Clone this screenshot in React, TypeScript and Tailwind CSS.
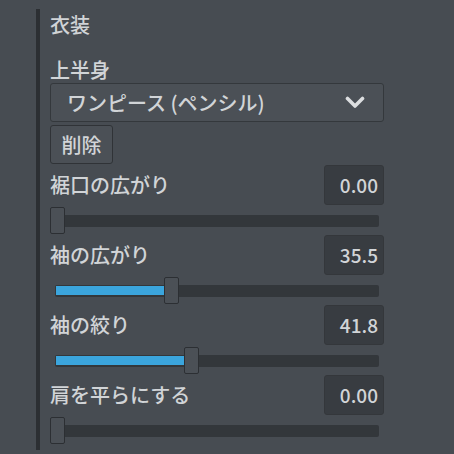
import React from 'react';

const sliders = [
  { label: '裾口の広がり', value: 0, text: '0.00' },
  { label: '袖の広がり', value: 35.5, text: '35.5' },
  { label: '袖の絞り', value: 41.8, text: '41.8' },
  { label: '肩を平らにする', value: 0, text: '0.00' },
];

const Slider: React.FC<{ label: string; value: number; text: string }> = ({ label, value, text }) => {
  const left = value * 3.2;
  return (
    <div className="flex flex-col h-[70px]">
      <div className="flex items-center justify-between h-[40px]">
        <span className="text-[20px] leading-none font-medium">{label}</span>
        <div className="w-[60px] h-[40px] rounded-[3px] bg-[#383c41] border border-[#34373b] flex items-center justify-end pr-[5px] text-[19px] font-medium">
          {text}
        </div>
      </div>
      <div className="relative h-[30px]">
        <div className="absolute left-[5px] right-[5px] top-[10px] h-[12px] rounded-[2px] bg-[#33373b]">
          {value > 0 && (
            <div
              className="absolute left-[1px] top-[1px] h-[9px] bg-[#3ba5dd]"
              style={{ width: left + 1 }}
            />
          )}
        </div>
        <div
          className="absolute top-[2px] w-[15px] h-[27px] rounded-[2px] bg-[#4b5056] border border-[#2c2f33]"
          style={{ left }}
        />
      </div>
    </div>
  );
};

export default function App() {
  return (
    <div
      className="w-[454px] h-[454px] bg-[#474c52] text-[#d1d4d7] overflow-hidden pl-[36px]"
      style={{ fontFamily: '"Noto Sans CJK JP", "Noto Sans", sans-serif' }}
    >
      <div className="mt-[9px] h-[441px] w-[348px] border-l-[4px] border-[#2c2f33] pl-[10px]">
        <div className="w-[334px] flex flex-col">
          <div className="mt-[2px] h-[28px] leading-[28px] text-[20px] font-medium">衣装</div>
          <div className="mt-[19px] h-[24px] leading-[24px] text-[20px] font-medium">上半身</div>
          <div className="mt-[1px] h-[39px] rounded-[3px] bg-[#4b5056] border border-[#34383c] flex items-center justify-between pl-[16px] pr-[18px] text-[20px] font-medium">
            <span>ワンピース (ペンシル)</span>
            <svg width="20" height="13" viewBox="0 0 20 13" fill="none">
              <path d="M2.5 2.5 L10 10 L17.5 2.5" stroke="#dcdee0" strokeWidth="3.6" strokeLinecap="round" strokeLinejoin="round" />
            </svg>
          </div>
          <button className="mt-[3px] w-[63px] h-[39px] rounded-[3px] bg-[#4b5056] border border-[#303337] flex items-center justify-center text-[20px] font-medium text-[#d1d4d7]">
            削除
          </button>
          <div className="mt-[1px] flex flex-col">
            {sliders.map((s) => (
              <Slider key={s.label} {...s} />
            ))}
          </div>
        </div>
      </div>
    </div>
  );
}
